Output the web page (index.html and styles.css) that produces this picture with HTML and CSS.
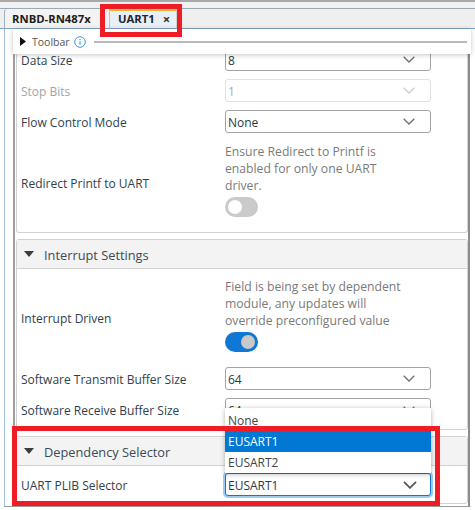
FILE: index.html
```html
<!DOCTYPE html>
<html lang="en">
<head>
<meta charset="utf-8">
<title>UART1</title>
<link rel="stylesheet" href="styles.css">
</head>
<body>
<div class="window">
  <div class="strip"></div>
  <div class="tabbar">
    <div class="tab">RNBD-RN487x</div>
    <div class="tab tab-active">UART1 <span class="tab-close">×</span></div>
  </div>
  <div class="pane">
    <div class="scroll">
      <section class="card card-first">
        <div class="row">
          <div class="label">Data Size</div>
          <div class="select"><span>8</span><svg class="chev" viewBox="0 0 12 7"><path d="M.7.7 6 6 11.3.7"/></svg></div>
        </div>
        <div class="row muted">
          <div class="label">Stop Bits</div>
          <div class="select select-off"><span>1</span><svg class="chev" viewBox="0 0 12 7"><path d="M.7.7 6 6 11.3.7"/></svg></div>
        </div>
        <div class="row">
          <div class="label">Flow Control Mode</div>
          <div class="select"><span>None</span><svg class="chev" viewBox="0 0 12 7"><path d="M.7.7 6 6 11.3.7"/></svg></div>
        </div>
        <div class="row">
          <div class="label">Redirect Printf to UART</div>
          <div class="control">
            <p class="help">Ensure Redirect to Printf is enabled for only one UART driver.</p>
            <div class="toggle"><i class="knob"></i></div>
          </div>
        </div>
      </section>

      <section class="card">
        <header class="card-head"><svg class="caret" viewBox="0 0 10 6"><path d="M0 0h10L5 6z"/></svg>Interrupt Settings</header>
        <div class="card-body">
          <div class="row">
            <div class="label">Interrupt Driven</div>
            <div class="control">
              <p class="help">Field is being set by dependent module, any updates will override preconfigured value</p>
              <div class="toggle toggle-on"><i class="knob"></i></div>
            </div>
          </div>
          <div class="row">
            <div class="label">Software Transmit Buffer Size</div>
            <div class="select"><span>64</span><svg class="chev" viewBox="0 0 12 7"><path d="M.7.7 6 6 11.3.7"/></svg></div>
          </div>
          <div class="row">
            <div class="label">Software Receive Buffer Size</div>
            <div class="select"><span>64</span><svg class="chev" viewBox="0 0 12 7"><path d="M.7.7 6 6 11.3.7"/></svg></div>
          </div>
        </div>
      </section>

      <section class="card card-last">
        <header class="card-head"><svg class="caret" viewBox="0 0 10 6"><path d="M0 0h10L5 6z"/></svg>Dependency Selector</header>
        <div class="card-body">
          <div class="row">
            <div class="label">UART PLIB Selector</div>
            <div class="select select-open">
              <span>EUSART1</span><svg class="chev chev-dark" viewBox="0 0 12 7"><path d="M.7.7 6 6 11.3.7"/></svg>
              <ul class="menu">
                <li>None</li>
                <li class="menu-on">EUSART1</li>
                <li>EUSART2</li>
              </ul>
            </div>
          </div>
        </div>
      </section>
    </div>

    <div class="toolbar">
      <svg class="tri" viewBox="0 0 6 9"><path d="M0 0l6 4.5L0 9z"/></svg>
      <span class="toolbar-text">Toolbar</span>
      <svg class="info" viewBox="0 0 12 12"><circle cx="6" cy="6" r="5.3"/><path d="M6 5.2v3.6M6 3v1.2"/></svg>
      <span class="rule"></span>
    </div>
  </div>
</div>
<div class="mark mark-tab"></div>
<div class="mark mark-dep"></div>
</body>
</html>
```

FILE: styles.css
```css
* { box-sizing: border-box; }
html, body { margin: 0; height: 100%; }
body {
  position: relative;
  width: 475px;
  height: 510px;
  overflow: hidden;
  background: #fff;
  font-family: "Open Sans", "Noto Sans", sans-serif;
  font-size: 12px;
  color: #33414d;
}
.window { display: flex; flex-direction: column; height: 507px; }
.strip { height: 9px; background: #f1f1f1; border-top: 2px solid #a8a8a8; border-bottom: 1px solid #9aa9b5; }
.tabbar {
  display: flex;
  height: 20px;
  padding-left: 4px;
  background: #efefef;
  border-bottom: 1px solid #7fa3c9;
  align-items: stretch;
}
.tab { width: 105px; padding: 1px 0 0 7px; font-weight: 700; font-size: 11.3px; color: #1c1c1c; line-height: 18px; background: #f3f3f3; border-left: 1px solid #9fb2c4; border-radius: 3px 0 0 0; }
.tab-active {
  width: 68px;
  margin-left: 0;
  padding: 0 0 0 8px;
  border-top: 2px solid #f5b53f;
  border-left: 1px solid #c4c4c4;
  border-right: 1px solid #d0d0d0;
  background: #e9eff6;
  color: #1c2733;
  border-radius: 0;
  display: flex;
  gap: 8px;
  line-height: 16px;
}
.tab-close { font-size: 13px; color: #333; }
.pane {
  position: relative;
  flex: 1;
  min-height: 0;
  margin-left: 4px;
  margin-right: 4px;
  border-left: 1px solid #9fc0de;
  border-right: 1px solid #fff;
  border-bottom: 1px solid #999;
}
.scroll {
  height: 100%;
  overflow: hidden;
  margin-left: 8px;
  padding-left: 1px;
  border-left: 2px solid #a0a0a0;
  border-right: 2px solid #8c8c8c;
  display: flex;
  flex-direction: column;
  gap: 6px;
}
.card { border: 1px solid #d2d2d2; border-radius: 3px; background: #fff; width: 452px; flex: none; }
.card-first { border-top: 0; padding: 19px 0 8px; border-radius: 0 0 3px 3px; }
.card-head {
  height: 29px;
  padding: 2px 0 0 7px;
  display: flex;
  align-items: center;
  gap: 10px;
  background: #f3f3f3;
  border-bottom: 1px solid #d2d2d2;
  font-size: 12.8px;
  color: #3d4a55;
  line-height: 26px;
}
.caret { width: 10px; height: 6px; fill: #3c3c3c; margin-bottom: 2px; }
.card-body { padding-top: 7px; padding-bottom: 8px; }
.card-last .card-body { padding-bottom: 7px; }
.row {
  display: grid;
  grid-template-columns: 204px 206px;
  align-items: center;
  padding-left: 4px;
  min-height: 23px;
}
.row + .row { margin-top: 8px; }
.label { padding-top: 2px; line-height: 17px; color: #2f3f4d; white-space: nowrap; }
.muted .label { color: #a3a3a3; }
.select {
  position: relative;
  height: 23px;
  display: flex;
  align-items: center;
  justify-content: space-between;
  padding: 0 15px 0 2px;
  border: 1px solid #a3a3a3;
  border-radius: 3px;
  background: #fff;
  color: #2d3a45;
}
.select > span { padding-top: 2px; line-height: 17px; }
.select-off { border-color: #e2e2e2; color: #a9a9a9; }
.select-off .chev { stroke: #cfcfcf; }
.select-open {
  border-color: #0f78d4;
  box-shadow: 0 0 0 2px #9ccbf4;
}
.chev { width: 12px; height: 7px; fill: none; stroke: #6f6f6f; stroke-width: 1.3; }
.chev-dark { width: 14px; height: 8px; margin-right: -2px; stroke: #555; stroke-width: 1.5; }
.control { display: flex; flex-direction: column; gap: 3px; padding: 2px 0 7px; }
.help { margin: 0; width: 181px; color: #7a7a7a; line-height: 17px; font-size: 12.2px; }
.toggle { width: 33px; height: 20px; border-radius: 10px; background: #cacaca; padding: 3px; display: flex; }
.knob { display: block; width: 14px; height: 14px; border-radius: 50%; background: #fff; }
.toggle-on { background: #0f78d4; justify-content: flex-end; }
.toggle-on .knob { background: #c9c9c9; }
.menu {
  position: absolute;
  left: -1px;
  right: -1px;
  bottom: calc(100% + 1px);
  margin: 0;
  padding: 0;
  list-style: none;
  background: #fff;
  box-shadow: 0 1px 5px rgba(0,0,0,.3);
  color: #444;
}
.menu li { height: 21px; padding-left: 3px; line-height: 21px; }
.menu li:first-child { height: 23px; line-height: 25px; }
.menu-on { background: #0078d4; color: #fff; }
.toolbar {
  position: absolute;
  left: 8px;
  top: 0;
  width: 458px;
  height: 25px;
  display: flex;
  align-items: center;
  padding-left: 7px;
  background: #fff;
  box-shadow: 0 1px 5px rgba(0,0,0,.22);
  color: #555;
  font-size: 10.5px;
}
.tri { width: 6px; height: 9px; fill: #111; margin-right: 6px; }
.toolbar-text { margin-right: 4px; }
.info { width: 12px; height: 12px; fill: none; stroke: #3f94dc; margin-right: 8px; }
.rule { flex: 1; height: 2px; background: #b9b9b9; margin-right: 4px; }
.mark { position: absolute; border: 5px solid #ee1c25; }
.mark-tab { left: 100px; top: 4px; width: 82px; height: 33px; }
.mark-dep { left: 12px; top: 426px; width: 428px; height: 80px; }
```
